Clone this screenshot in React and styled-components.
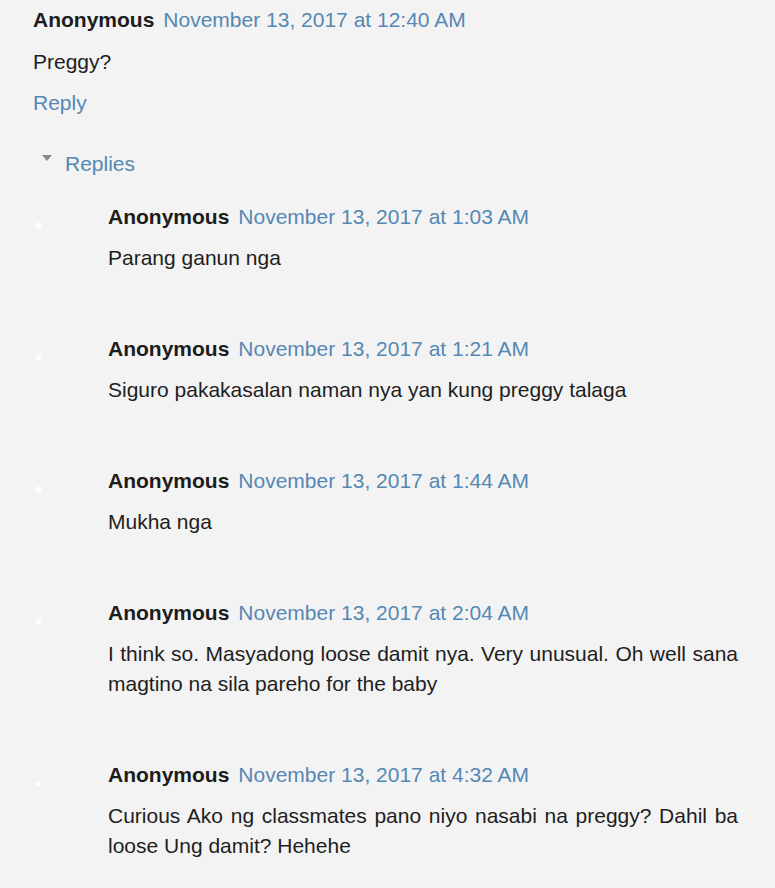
import React from 'react'
import styled, { createGlobalStyle } from 'styled-components'

const GlobalStyle = createGlobalStyle`
  html, body {
    margin: 0;
    padding: 0;
    background: #f3f3f3;
  }
  body {
    font-family: "Liberation Sans", Arial, sans-serif;
    font-size: 21px;
    line-height: 30px;
    color: #222;
  }
`

const Page = styled.div`
  padding: 5px 37px 20px 33px;
  min-height: 888px;
  box-sizing: border-box;
`

const Header = styled.div`
  display: flex;
  align-items: baseline;
  white-space: nowrap;
`

const User = styled.span`
  font-weight: bold;
  color: #1c1c1c;
`

const DateLink = styled.a`
  margin-left: 9px;
  color: #5588b4;
  text-decoration: none;
`

const Body = styled.p`
  margin: ${p => (p.$top ? '12px' : '11px')} 0 0;
  text-align: justify;
  color: #1e1e1e;
`

const ReplyLink = styled.a`
  display: block;
  margin-top: 11px;
  color: #5588b4;
  text-decoration: none;
`

const Toggle = styled.div`
  display: flex;
  align-items: center;
  gap: 13px;
  margin-top: 31px;
  padding-left: 9px;
  color: #5588b4;
`

const Caret = styled.span`
  width: 0;
  height: 0;
  border-left: 5px solid transparent;
  border-right: 5px solid transparent;
  border-top: 6px solid #888;
  margin-top: -12px;
`

const Thread = styled.ul`
  list-style: none;
  margin: 23px 0 0;
  padding: 0;
`

const Item = styled.li`
  display: flex;
  & + & {
    margin-top: 61px;
  }
`

const Avatar = styled.div`
  flex: 0 0 75px;
  &::before {
    content: '';
    display: block;
    width: 5px;
    height: 5px;
    margin: 21px 0 0 3px;
    background: #fff;
    border-radius: 1px;
  }
`

const Content = styled.div`
  flex: 1;
  min-width: 0;
`

const replies = [
  { time: '1:03 AM', text: 'Parang ganun nga' },
  { time: '1:21 AM', text: 'Siguro pakakasalan naman nya yan kung preggy talaga' },
  { time: '1:44 AM', text: 'Mukha nga' },
  {
    time: '2:04 AM',
    text: 'I think so. Masyadong loose damit nya. Very unusual. Oh well sana magtino na sila pareho for the baby'
  },
  {
    time: '4:32 AM',
    text: 'Curious Ako ng classmates pano niyo nasabi na preggy? Dahil ba loose Ung damit? Hehehe'
  }
]

const App = () => (
  <>
    <GlobalStyle />
    <Page>
      <Header>
        <User>Anonymous</User>
        <DateLink>November 13, 2017 at 12:40 AM</DateLink>
      </Header>
      <Body $top>Preggy?</Body>
      <ReplyLink>Reply</ReplyLink>
      <Toggle>
        <Caret />
        <span>Replies</span>
      </Toggle>
      <Thread>
        {replies.map((r, i) => (
          <Item key={i}>
            <Avatar />
            <Content>
              <Header>
                <User>Anonymous</User>
                <DateLink>November 13, 2017 at {r.time}</DateLink>
              </Header>
              <Body>{r.text}</Body>
            </Content>
          </Item>
        ))}
      </Thread>
    </Page>
  </>
)

export default App
